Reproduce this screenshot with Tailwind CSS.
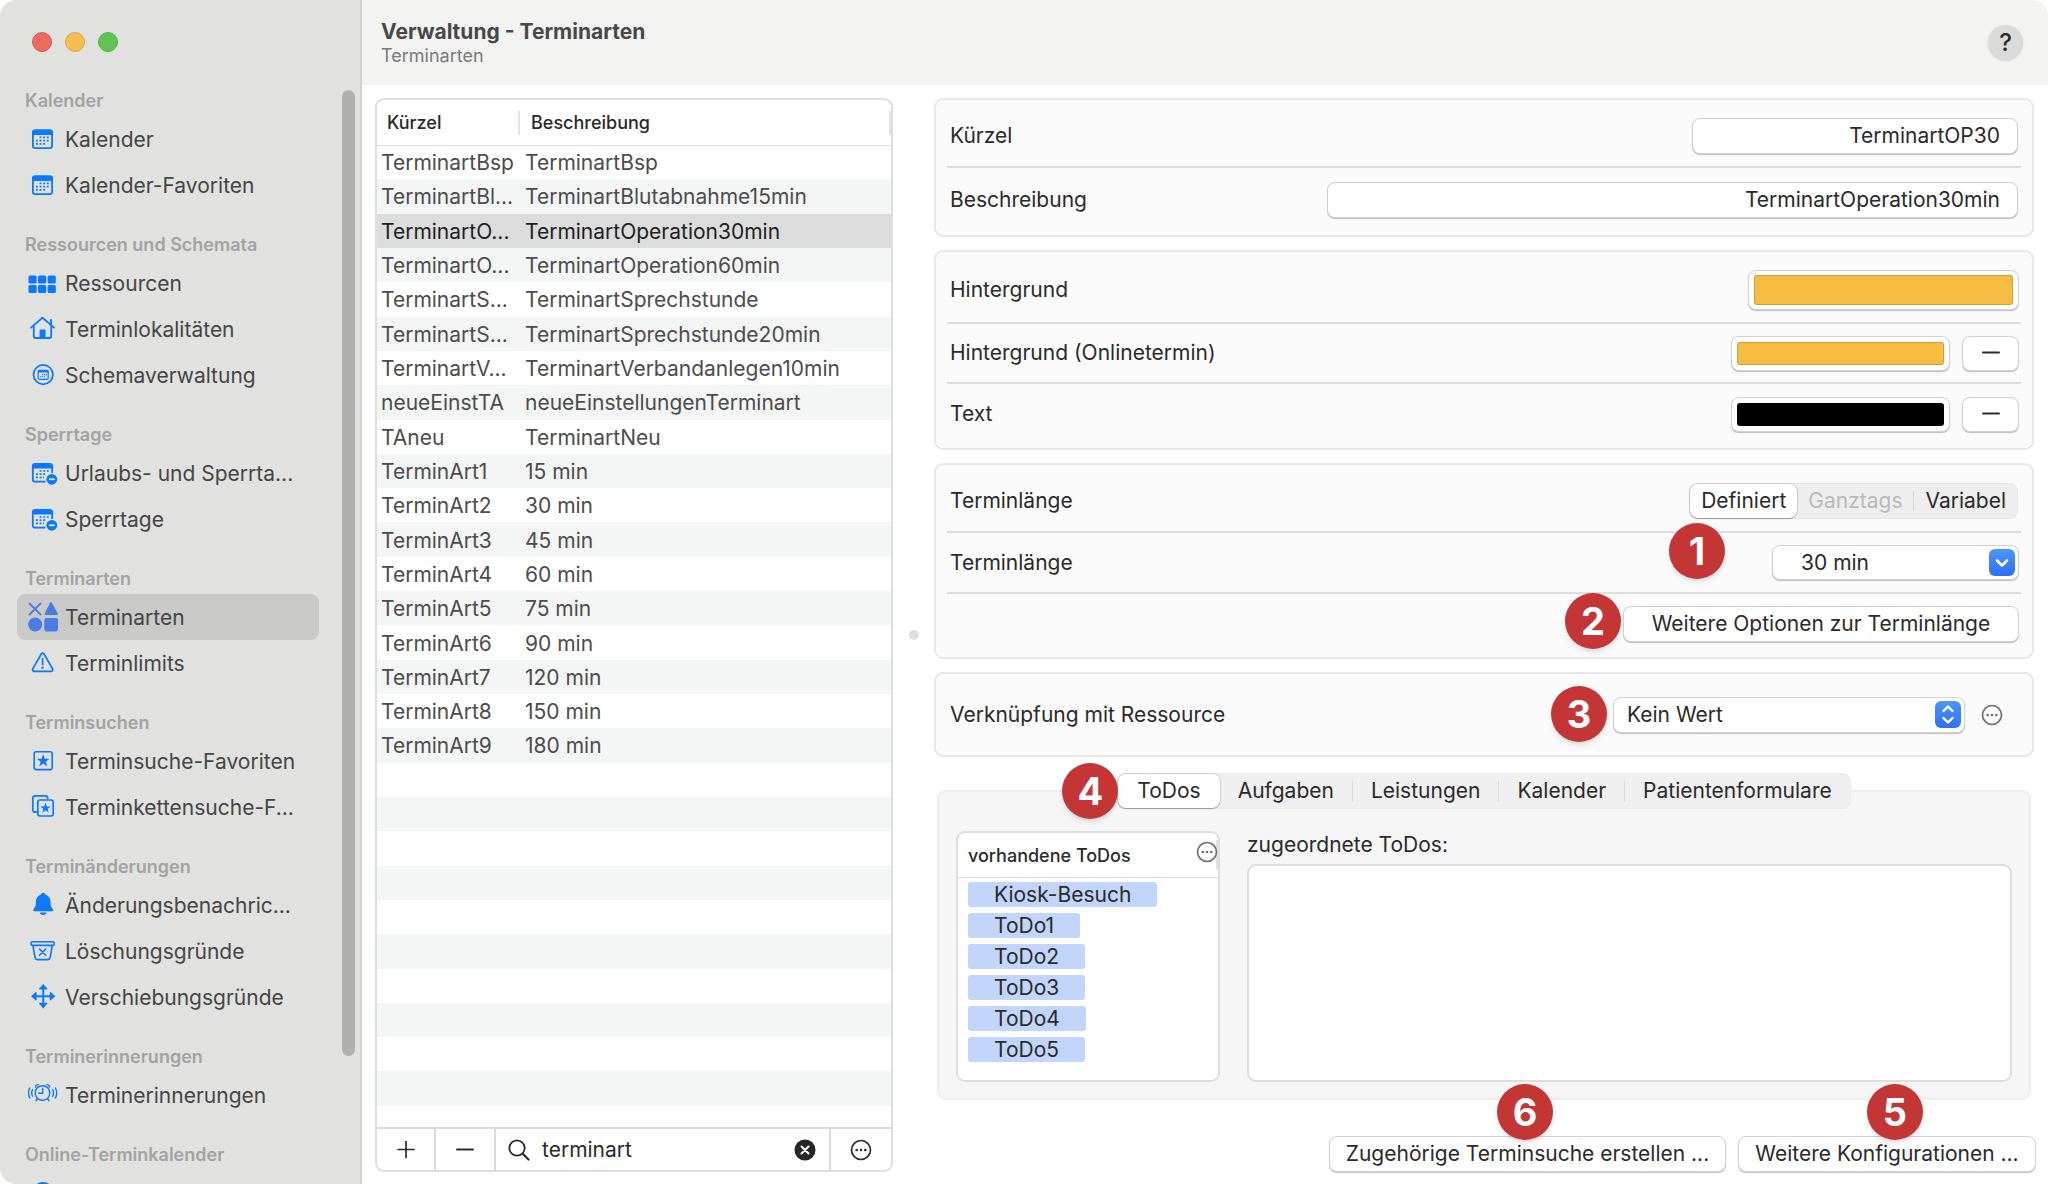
<!DOCTYPE html>
<html lang="de">
<head>
  <meta charset="UTF-8">
  <meta name="viewport" content="width=device-width, initial-scale=1">
  <title>Verwaltung - Terminarten</title>
  <script src="https://cdn.jsdelivr.net/npm/@tailwindcss/browser@4"></script>
</head>
<body class="bg-white font-['Inter','Liberation_Sans',sans-serif] text-[21px] leading-6 text-[#2a2a2a]">

  <!-- Shared icons -->
  <svg class="hidden">
    <symbol id="i-calendar" viewBox="0 0 30 30">
      <rect x="4.9" y="6.4" width="19.2" height="17.7" rx="2.4" fill="none" stroke="currentColor" stroke-width="1.8"/>
      <path d="M4 11V8.5a3 3 0 0 1 3-3h15a3 3 0 0 1 3 3V11z" fill="currentColor"/>
      <path d="M11.6 13.4h10M8 16.6h13.6M8 19.8h10" stroke="currentColor" stroke-width="1.7" stroke-dasharray="1.9 1.7" fill="none"/>
    </symbol>
    <symbol id="i-calendar-minus" viewBox="0 0 30 30">
      <path d="M17.5 23.6H7a2.2 2.2 0 0 1-2.200-2.200V8h19.400v7" fill="none" stroke="currentColor" stroke-width="1.8"/>
      <path d="M4 10.500V8a3 3 0 0 1 3-3h15a3 3 0 0 1 3 3v2.500z" fill="currentColor"/>
      <path d="M11.600 13h10M8 16.200h10M8 19.400h8" stroke="currentColor" stroke-width="1.7" stroke-dasharray="1.9 1.7" fill="none"/>
      <circle cx="23.800" cy="21.300" r="5.400" fill="currentColor"/>
      <path d="M21 21.300h5.600" stroke="#fff" stroke-width="1.600"/>
    </symbol>
    <symbol id="i-grid" viewBox="0 0 30 30">
      <g fill="currentColor"><rect x=".5" y="7.500" width="8.200" height="8" rx="1.600"/><rect x="10" y="7.500" width="8.200" height="8" rx="1.600"/><rect x="19.600" y="7.500" width="8.200" height="8" rx="1.600"/><rect x=".5" y="17" width="8.200" height="8" rx="1.600"/><rect x="10" y="17" width="8.200" height="8" rx="1.600"/><rect x="19.600" y="17" width="8.200" height="8" rx="1.600"/></g>
    </symbol>
    <symbol id="i-house" viewBox="0 0 30 30">
      <path d="M3 13.600 14.500 3.800 26 13.600M5.800 12v10a2 2 0 0 0 2 2h13.400a2 2 0 0 0 2-2V12M23 10.500V5.800" fill="none" stroke="currentColor" stroke-width="1.800" stroke-linecap="round" stroke-linejoin="round"/>
      <path d="M11.600 24v-7.500a1 1 0 0 1 1-1h4a1 1 0 0 1 1 1V24z" fill="currentColor"/>
    </symbol>
    <symbol id="i-schema" viewBox="0 0 30 30">
      <circle cx="15.200" cy="14.600" r="9.700" fill="none" stroke="currentColor" stroke-width="1.700"/>
      <rect x="10.200" y="10.400" width="10" height="9" rx="1.200" fill="none" stroke="currentColor" stroke-width="1.200"/>
      <path d="M10.200 11.500h10" stroke="currentColor" stroke-width="2"/>
      <path d="M14 14.600h5M12 16.800h5" stroke="currentColor" stroke-width="1.100" stroke-dasharray="1.200 .8"/>
    </symbol>
    <symbol id="i-shapes" viewBox="0 0 30 30">
      <path d="m1.500 1.500 11 11m0-11-11 11" stroke="currentColor" stroke-width="1.900" stroke-linecap="round"/>
      <path d="M22 .8c.6-1 1.400-1 2 0l5.800 10.700c.4.800 0 1.500-.9 1.500H17.600c-.9 0-1.300-.7-.9-1.500z" fill="currentColor"/>
      <circle cx="7.200" cy="22.500" r="7" fill="currentColor"/>
      <rect x="16.300" y="16" width="13.700" height="13.400" rx="2" fill="currentColor"/>
    </symbol>
    <symbol id="i-warning" viewBox="0 0 30 30">
      <path d="M13.300 6c.7-1.100 2-1.100 2.700 0l8.600 14.800c.6 1.200-.1 2.500-1.500 2.500H6.200c-1.400 0-2.100-1.300-1.500-2.500z" fill="none" stroke="currentColor" stroke-width="1.700"/>
      <path d="M14.600 10.500v6" stroke="currentColor" stroke-width="1.700" stroke-linecap="round"/><circle cx="14.600" cy="19.600" r="1.200" fill="currentColor"/>
    </symbol>
    <symbol id="i-star-square" viewBox="0 0 30 30">
      <rect x="6.200" y="5.800" width="18" height="17.800" rx="2" fill="none" stroke="currentColor" stroke-width="1.600"/>
      <path d="m15.200 8.200 1.600 4.600h4.800l-3.900 2.900 1.500 4.700-4-2.900-4 2.900 1.500-4.700-3.900-2.900h4.800z" fill="currentColor"/>
    </symbol>
    <symbol id="i-star-squares" viewBox="0 0 30 30">
      <path d="M9 20.200H7a2.200 2.200 0 0 1-2.200-2.200V6A2.200 2.200 0 0 1 7 3.800h10.500A2.200 2.200 0 0 1 19.700 6v1" fill="none" stroke="currentColor" stroke-width="1.700"/>
      <rect x="9.800" y="8" width="15.400" height="16" rx="2.200" fill="none" stroke="currentColor" stroke-width="1.700"/>
      <path d="m17.500 10.600 1.300 3.800h4l-3.200 2.400 1.200 3.900-3.300-2.400-3.300 2.400 1.200-3.900-3.200-2.400h4z" fill="currentColor"/>
    </symbol>
    <symbol id="i-bell" viewBox="0 0 30 30">
      <path d="M15.200 3c1.300 0 2.200.7 2.500 1.700 3.200 1 4.800 3.700 4.800 7.200 0 4.600 1.300 5.800 2.300 7 .9 1.200.4 2.400-1.100 2.400h-17c-1.500 0-2-1.200-1.100-2.400 1-1.200 2.300-2.400 2.300-7 0-3.500 1.600-6.200 4.800-7.200C13 3.700 13.900 3 15.200 3zM11.800 22.600h6.800c-.3 1.500-1.600 2.500-3.400 2.500s-3.100-1-3.400-2.500z" fill="currentColor"/>
    </symbol>
    <symbol id="i-trash" viewBox="0 0 30 30">
      <g fill="none" stroke="currentColor" stroke-width="1.600" stroke-linecap="round"><rect x="3" y="5.800" width="23.200" height="3.600" rx="1.500"/><path d="m4.900 9.500 2.200 12.200c.2 1.200 1 1.900 2.200 1.900h10.600c1.200 0 2-.7 2.200-1.900l2.200-12.200M11.500 13l6.200 6.200m0-6.200-6.200 6.200"/></g>
    </symbol>
    <symbol id="i-move" viewBox="0 0 30 30">
      <path d="M15.200 5v18M6 14.200h18.500" stroke="currentColor" stroke-width="1.900"/>
      <path d="m15.200 2 4 4.600c.4.600.1 1-.4 1h-7.200c-.5 0-.8-.4-.4-1zm0 24.400 4-4.600c.4-.6.1-1-.4-1h-7.200c-.5 0-.8.400-.4 1zM3 14.200l4.600-4c.6-.4 1-.1 1 .4v7.200c0 .5-.4.800-1 .4zm24.400 0-4.600-4c-.6-.4-1-.1-1 .4v7.200c0 .5.400.8 1 .4z" fill="currentColor"/>
    </symbol>
    <symbol id="i-alarm" viewBox="0 0 30 30">
      <g fill="none" stroke="currentColor" stroke-width="1.400" stroke-linecap="round"><circle cx="14.500" cy="13" r="7.300"/><path d="M14.700 8.500v4.800h-4M9.500 18.500 8 20.800m11.500-2.300 1.500 2.300M7.800 7.200c-.6-1.500.8-3 2.600-2.400m10.800 2.400c.6-1.500-.8-3-2.600-2.400M4.500 9.800c-1 2-1 4.400 0 6.400M1.800 8C.2 11 .2 15 1.800 18M24.700 9.800c1 2 1 4.400 0 6.400M27.400 8c1.600 3 1.600 7 0 10"/></g>
    </symbol>
    <symbol id="i-disc" viewBox="0 0 30 30"><circle cx="15" cy="15" r="11" fill="currentColor"/></symbol>
    <symbol id="i-more" viewBox="0 0 24 24">
      <circle cx="12" cy="12" r="9.500" fill="none" stroke="currentColor" stroke-width="1.700"/>
      <g fill="currentColor"><circle cx="7.700" cy="12" r="1.300"/><circle cx="12" cy="12" r="1.300"/><circle cx="16.300" cy="12" r="1.300"/></g>
    </symbol>
    <symbol id="i-minus" viewBox="0 0 18 18"><path d="M1 8.500h16" stroke="currentColor" stroke-width="1.900" stroke-linecap="round"/></symbol>
  </svg>

  <div class="flex h-screen overflow-hidden rounded-2xl">

    <!-- Sidebar -->
    <aside class="flex w-[362px] shrink-0 flex-col overflow-hidden border-r-2 border-[#d0d0ce] bg-[#e1e1df]">
      <div class="flex h-16 shrink-0 gap-[13px] pt-8 pl-8">
        <button aria-label="Schließen" class="size-5 rounded-full border border-[#d95f53] bg-[#ec6a5e]"></button>
        <button aria-label="Minimieren" class="size-5 rounded-full border border-[#dfa73e] bg-[#f4be4f]"></button>
        <button aria-label="Vergrößern" class="size-5 rounded-full border border-[#55b146] bg-[#61c554]"></button>
      </div>
      <div class="relative min-h-0 flex-1">
        <nav id="nav" class="h-full overflow-hidden pr-[41px] pl-[17px] text-[#454545]"></nav>
        <div class="absolute top-[26px] right-[5px] bottom-32 w-[13px] rounded-full bg-[#b0b0ae]"></div>
      </div>
    </aside>

    <div class="flex min-w-0 flex-1 flex-col">
      <header class="flex h-[85px] shrink-0 justify-between bg-[#f3f3f1] pr-[25px] pl-[19px]">
        <div class="pt-[18px]">
          <h1 class="text-[21px] leading-7 font-bold text-[#484848]">Verwaltung - Terminarten</h1>
          <p class="text-[18px] leading-5 text-[#7b7b7a]">Terminarten</p>
        </div>
        <button aria-label="Hilfe" class="mt-[25px] size-[35px] rounded-full bg-[#dadad8] text-[24px] font-medium shadow-sm">?</button>
      </header>

      <main class="flex min-h-0 flex-1 pt-[13px] pr-[14px] pb-3 pl-[13px]">

        <!-- List of appointment types -->
        <section class="flex w-[518px] shrink-0 flex-col overflow-hidden rounded-[9px] border-2 border-[#dedede]">
          <div class="min-h-0 flex-1 overflow-hidden">
            <table class="h-full w-full table-fixed border-collapse text-left">
              <thead>
                <tr class="h-[45px] border-b border-[#dcdcdc] text-[18px]">
                  <th class="w-[143px] p-0 pt-0.5 font-medium"><div class="border-r-2 border-[#e3e3e3] pl-[10px]">Kürzel</div></th>
                  <th class="p-0 pt-0.5 font-medium"><div class="border-r-2 border-[#e3e3e3] pl-[11px]">Beschreibung</div></th>
                </tr>
              </thead>
              <tbody id="rows" class="text-[#4c4c4c]"></tbody>
            </table>
          </div>
          <div class="flex h-[43px] shrink-0 border-t-2 border-[#dcdcdc]">
            <button aria-label="Hinzufügen" class="flex w-[59px] items-center justify-center border-r-2 border-[#dcdcdc]">
              <svg class="size-[18px]" viewBox="0 0 18 18"><path d="M1 8.500h16M9 .5v16" stroke="currentColor" stroke-width="1.700" stroke-linecap="round"/></svg>
            </button>
            <button aria-label="Entfernen" class="flex w-[60px] items-center justify-center border-r-2 border-[#dcdcdc]">
              <svg class="size-[18px]"><use href="#i-minus"/></svg>
            </button>
            <label class="flex min-w-0 flex-1 items-center gap-3 pr-[13px] pl-3">
              <svg class="size-[22px] shrink-0" viewBox="0 0 22 22"><g fill="none" stroke="currentColor" stroke-width="1.800" stroke-linecap="round"><circle cx="9" cy="9" r="7.700"/><path d="m15 15 5.500 5.500" stroke-width="2.200"/></g></svg>
              <input type="text" value="terminart" aria-label="Suchen" class="min-w-0 flex-1 outline-none">
              <button aria-label="Suche löschen">
                <svg class="size-[22px]" viewBox="0 0 22 22"><circle cx="11" cy="11" r="10.500" fill="#262626"/><path d="m7.500 7.500 7 7m0-7-7 7" stroke="#fff" stroke-width="2" stroke-linecap="round"/></svg>
              </button>
            </label>
            <button aria-label="Mehr" class="flex w-[62px] items-center justify-center border-l-2 border-[#dcdcdc]">
              <svg class="size-6"><use href="#i-more"/></svg>
            </button>
          </div>
        </section>

        <!-- Splitter -->
        <div class="flex w-[41px] shrink-0 items-center justify-center"><span class="size-[10px] rounded-full bg-[#dfdfdf]"></span></div>

        <!-- Details -->
        <section class="flex min-w-0 flex-1 flex-col gap-[13px]">

          <div class="rounded-[9px] border-2 border-[#e8e8e8] bg-[#fbfbfb] px-[11px] pt-[5px] pb-1">
            <div class="flex h-[63px] items-center justify-between border-b-2 border-[#dedede] pr-[3px] pl-[3px]">
              <label for="kuerzel">Kürzel</label>
              <input id="kuerzel" type="text" value="TerminartOP30" class="h-9 w-[326px] rounded-lg border border-[#d2d2d2] bg-white px-[17px] text-right shadow-[0_1px_1px_#00000040]">
            </div>
            <div class="flex h-[63px] items-center justify-between pr-[3px] pl-[3px]">
              <label for="beschreibung">Beschreibung</label>
              <input id="beschreibung" type="text" value="TerminartOperation30min" class="h-9 w-[691px] rounded-lg border border-[#d2d2d2] bg-white px-[17px] text-right shadow-[0_1px_1px_#00000040]">
            </div>
          </div>

          <div class="rounded-[9px] border-2 border-[#e8e8e8] bg-[#fbfbfb] px-[11px] pt-1.5 pb-1">
            <div class="flex h-[66px] items-center justify-between border-b-2 border-[#dedede] pr-0.5 pl-[3px]">
              <label for="bg">Hintergrund</label>
              <input id="bg" type="color" value="#f5bd41" class="h-10 w-[271px] rounded-lg border border-[#d2d2d2] bg-white px-[5px] py-1 shadow-[0_1px_1px_#00000040] [&::-webkit-color-swatch]:rounded-[3px] [&::-webkit-color-swatch]:border-black/15 [&::-webkit-color-swatch-wrapper]:p-0">
            </div>
            <div class="flex h-[60px] items-center border-b-2 border-[#dedede] pr-0.5 pl-[3px]">
              <label for="bg-online" class="flex-1">Hintergrund (Onlinetermin)</label>
              <input id="bg-online" type="color" value="#f5bd41" class="mr-3 h-[35px] w-[219px] rounded-lg border border-[#d2d2d2] bg-white p-[5px] shadow-[0_1px_1px_#00000040] [&::-webkit-color-swatch]:rounded-[3px] [&::-webkit-color-swatch]:border-black/15 [&::-webkit-color-swatch-wrapper]:p-0">
              <button aria-label="Zurücksetzen" class="flex h-[35px] w-[57px] items-center justify-center rounded-lg border border-[#d2d2d2] bg-white shadow-[0_1px_1px_#00000040]"><svg class="size-[18px]"><use href="#i-minus"/></svg></button>
            </div>
            <div class="flex h-[60px] items-center pr-0.5 pl-[3px]">
              <label for="fg" class="flex-1">Text</label>
              <input id="fg" type="color" value="#000000" class="mr-3 h-[35px] w-[219px] rounded-lg border border-[#d2d2d2] bg-white p-[5px] shadow-[0_1px_1px_#00000040] [&::-webkit-color-swatch]:rounded-[3px] [&::-webkit-color-swatch]:border-black/15 [&::-webkit-color-swatch-wrapper]:p-0">
              <button aria-label="Zurücksetzen" class="flex h-[35px] w-[57px] items-center justify-center rounded-lg border border-[#d2d2d2] bg-white shadow-[0_1px_1px_#00000040]"><svg class="size-[18px]"><use href="#i-minus"/></svg></button>
            </div>
          </div>

          <div class="rounded-[9px] border-2 border-[#e8e8e8] bg-[#fbfbfb] px-[11px] pt-1.5 pb-1">
            <div class="flex h-[62px] items-center justify-between border-b-2 border-[#dedede] pr-[3px] pl-[3px]">
              <span>Terminlänge</span>
              <div class="flex h-9 items-center rounded-lg border border-[#e6e6e6] bg-[#eeeeee]">
                <button class="h-full rounded-lg bg-white px-[11px] shadow-[0_0_1px_1px_#00000020,0_1px_1px_#00000040]">Definiert</button>
                <button disabled class="px-[11px] text-[#b9b9b9]">Ganztags</button>
                <span class="h-5 border-l border-[#d4d4d4]"></span>
                <button class="px-[11px]">Variabel</button>
              </div>
            </div>
            <div class="relative flex h-[61px] items-center justify-between border-b-2 border-[#dedede] pr-0.5 pl-[3px]">
              <label for="laenge">Terminlänge</label>
              <div class="relative">
                <select id="laenge" class="h-[35px] w-[247px] appearance-none rounded-lg border border-[#d2d2d2] bg-white pl-[28px] shadow-[0_1px_1px_#00000040]">
                  <option>30 min</option>
                </select>
                <svg class="pointer-events-none absolute top-1 right-1 h-[27px] w-[26px] rounded-md bg-linear-to-b from-[#4d95f8] to-[#2f70f6]" viewBox="0 0 26 27"><path d="m8 11.500 5 5 5-5" fill="none" stroke="#fff" stroke-width="2.600" stroke-linecap="round" stroke-linejoin="round"/></svg>
              </div>
              <span class="absolute -top-[10px] right-[296px] flex size-14 items-center justify-center rounded-full bg-[#c43536] text-[38px] font-bold text-white shadow-md">1</span>
            </div>
            <div class="flex h-[59px] items-center justify-end pr-0.5">
              <div class="relative">
                <button class="h-9 w-[396px] rounded-lg border border-[#d2d2d2] bg-white shadow-[0_1px_1px_#00000040]">Weitere Optionen zur Terminlänge</button>
                <span class="absolute right-full bottom-[-7px] mr-0.5 flex size-14 items-center justify-center rounded-full bg-[#c43536] text-[38px] font-bold text-white shadow-md">2</span>
              </div>
            </div>
          </div>

          <div class="rounded-[9px] border-2 border-[#e8e8e8] bg-[#fbfbfb] px-[11px] pt-[5px] pb-1">
            <div class="flex h-[72px] items-center pl-[3px]">
              <label for="ressource" class="flex-1">Verknüpfung mit Ressource</label>
              <div class="relative mr-[15px]">
                <select id="ressource" class="h-9 w-[352px] appearance-none rounded-lg border border-[#d2d2d2] bg-white pl-[13px] shadow-[0_1px_1px_#00000040]">
                  <option>Kein Wert</option>
                </select>
                <svg class="pointer-events-none absolute top-1 right-1 h-[27px] w-[26px] rounded-md bg-linear-to-b from-[#4d95f8] to-[#2f70f6]" viewBox="0 0 26 27"><path d="m8.500 10 4.500-4.500 4.500 4.500m-9 7 4.500 4.500 4.500-4.500" fill="none" stroke="#fff" stroke-width="2.400" stroke-linecap="round" stroke-linejoin="round"/></svg>
                <span class="absolute right-full bottom-[-9px] mr-[6px] flex size-14 items-center justify-center rounded-full bg-[#c43536] text-[38px] font-bold text-white shadow-md">3</span>
              </div>
              <button aria-label="Mehr" class="mr-[17px] text-[#6f6f6f]"><svg class="size-6"><use href="#i-more"/></svg></button>
            </div>
          </div>

          <!-- Tabs -->
          <div class="mx-[3px] mt-5 flex min-h-0 flex-1 flex-col rounded-[9px] border-2 border-[#eeeeee] bg-[#f6f6f6] px-[17px] pb-4">
            <div class="relative -mt-[19px] flex h-9 shrink-0 items-center self-center rounded-lg border border-[#ebebeb] bg-[#f0f0f0]">
              <button class="h-full rounded-lg bg-white px-[19px] shadow-[0_0_1px_1px_#00000020,0_1px_1px_#00000040]">ToDos</button>
              <button class="px-[18px]">Aufgaben</button>
              <span class="h-5 border-l border-[#d8d8d8]"></span>
              <button class="px-[18px]">Leistungen</button>
              <span class="h-5 border-l border-[#d8d8d8]"></span>
              <button class="px-[18px]">Kalender</button>
              <span class="h-5 border-l border-[#d8d8d8]"></span>
              <button class="px-[18px]">Patientenformulare</button>
              <span class="absolute right-full flex size-14 items-center justify-center rounded-full bg-[#c43536] text-[38px] font-bold text-white shadow-md">4</span>
            </div>
            <div class="flex min-h-0 flex-1 gap-[27px] pt-[22px]">
              <div class="flex w-[264px] shrink-0 flex-col rounded-[9px] border-2 border-[#dedede] bg-white">
                <div class="flex h-[45px] shrink-0 items-center justify-between border-b border-[#dedede] pl-[10px] text-[18px]">
                  <h2 class="pt-0.5 font-medium">vorhandene ToDos</h2>
                  <button aria-label="Mehr" class="border-r-2 border-[#e3e3e3] pb-1.5 text-[#6f6f6f]"><svg class="-mr-[3px] size-6"><use href="#i-more"/></svg></button>
                </div>
                <ul id="todos" class="flex flex-col items-start gap-1.5 pt-1 pl-[10px]"></ul>
              </div>
              <div class="flex min-w-0 flex-1 flex-col">
                <label for="zugeordnet" class="h-[33px] pt-0.5">zugeordnete ToDos:</label>
                <textarea id="zugeordnet" class="min-h-0 w-full flex-1 resize-none rounded-[9px] border-2 border-[#dedede] bg-white"></textarea>
              </div>
            </div>
          </div>

          <div class="-mr-0.5 mt-[23px] flex justify-end gap-3">
            <div class="relative">
              <button class="h-9 w-[397px] rounded-lg border border-[#d2d2d2] bg-white shadow-[0_1px_1px_#00000040]">Zugehörige Terminsuche erstellen ...</button>
              <span class="absolute bottom-8 left-[168px] flex size-14 items-center justify-center rounded-full bg-[#c43536] text-[38px] font-bold text-white shadow-md">6</span>
            </div>
            <div class="relative">
              <button class="h-9 w-[298px] rounded-lg border border-[#d2d2d2] bg-white shadow-[0_1px_1px_#00000040]">Weitere Konfigurationen ...</button>
              <span class="absolute bottom-8 left-[129px] flex size-14 items-center justify-center rounded-full bg-[#c43536] text-[38px] font-bold text-white shadow-md">5</span>
            </div>
          </div>
        </section>
      </main>
    </div>
  </div>

  <script>
    const groups = [
      ['Kalender', [['calendar', 'Kalender'], ['calendar', 'Kalender-Favoriten']]],
      ['Ressourcen und Schemata', [['grid', 'Ressourcen'], ['house', 'Terminlokalitäten'], ['schema', 'Schemaverwaltung']]],
      ['Sperrtage', [['calendar-minus', 'Urlaubs- und Sperrta...'], ['calendar-minus', 'Sperrtage']]],
      ['Terminarten', [['shapes', 'Terminarten'], ['warning', 'Terminlimits']]],
      ['Terminsuchen', [['star-square', 'Terminsuche-Favoriten'], ['star-squares', 'Terminkettensuche-F...']]],
      ['Terminänderungen', [['bell', 'Änderungsbenachric...'], ['trash', 'Löschungsgründe'], ['move', 'Verschiebungsgründe']]],
      ['Terminerinnerungen', [['alarm', 'Terminerinnerungen']]],
      ['Online-Terminkalender', [['disc', '']]]
    ];
    document.getElementById('nav').innerHTML = groups.map(([title, items]) => `
      <h2 class="h-[52px] pt-[21px] pl-2 text-[18px] leading-8 font-semibold text-[#a3a3a1]">${title}</h2>
      ${items.map(([icon, label]) => {
        const active = icon === 'shapes';
        return `<a href="#" class="flex h-[46px] items-center gap-[7px] rounded-lg pl-[11px] whitespace-nowrap ${active ? 'bg-[#c9c9c7]' : ''}">
          <svg class="size-[30px] shrink-0 ${active ? 'text-[#4a7ce8]' : 'text-[#0a78ff]'}"><use href="#i-${icon}"/></svg><span class="pt-0.5">${label}</span></a>`;
      }).join('')}`).join('');

    const types = [
      ['TerminartBsp', 'TerminartBsp'],
      ['TerminartBl...', 'TerminartBlutabnahme15min'],
      ['TerminartO...', 'TerminartOperation30min'],
      ['TerminartO...', 'TerminartOperation60min'],
      ['TerminartS...', 'TerminartSprechstunde'],
      ['TerminartS...', 'TerminartSprechstunde20min'],
      ['TerminartV...', 'TerminartVerbandanlegen10min'],
      ['neueEinstTA', 'neueEinstellungenTerminart'],
      ['TAneu', 'TerminartNeu'],
      ['TerminArt1', '15 min'],
      ['TerminArt2', '30 min'],
      ['TerminArt3', '45 min'],
      ['TerminArt4', '60 min'],
      ['TerminArt5', '75 min'],
      ['TerminArt6', '90 min'],
      ['TerminArt7', '120 min'],
      ['TerminArt8', '150 min'],
      ['TerminArt9', '180 min']
    ];
    // Fill the rest of the list with empty striped rows, the last one is cut off
    while (types.length < 28) types.push(['', '']);
    document.getElementById('rows').innerHTML = types.map(([short, name], i) => `
      <tr class="${i === 2 ? 'bg-[#dcdcdc] text-[#1f1f1f]' : i % 2 ? 'bg-[#f4f5f5]' : ''}">
        <td class="h-[34px] p-0 pt-0.5 pl-1 whitespace-nowrap">${short}</td>
        <td class="h-[34px] p-0 pt-0.5 pl-[5px] whitespace-nowrap">${name}</td>
      </tr>`).join('') + '<tr class="h-[21px]"><td class="p-0"></td><td class="p-0"></td></tr>';

    document.getElementById('todos').innerHTML = ['Kiosk-Besuch', 'ToDo1', 'ToDo2', 'ToDo3', 'ToDo4', 'ToDo5'].map(t =>
      `<li class="h-[25px] rounded-[3px] bg-[#c1d5fd] px-[26px] leading-[25px]">${t}</li>`).join('');
  </script>
</body>
</html>
